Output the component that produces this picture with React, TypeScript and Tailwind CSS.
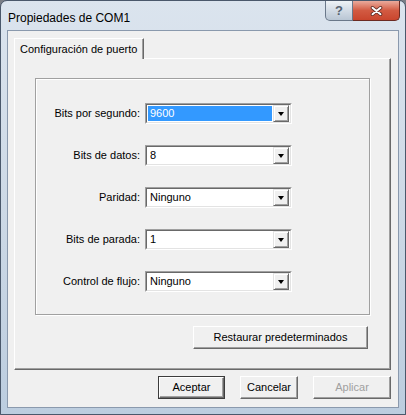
const font = { fontFamily: '"Liberation Sans", Arial, sans-serif' };

const rows = [
  { label: "Bits por segundo:", value: "9600", selected: true },
  { label: "Bits de datos:", value: "8" },
  { label: "Paridad:", value: "Ninguno" },
  { label: "Bits de parada:", value: "1" },
  { label: "Control de flujo:", value: "Ninguno" },
];

function Combo({ value, selected }: { value: string; selected?: boolean }) {
  return (
    <div className="flex h-[21px] w-[147px] border border-t-[#a0a0a0] border-l-[#a0a0a0] border-r-white border-b-white">
      <div className="flex flex-1 items-center border border-t-[#696969] border-l-[#696969] border-r-[#e3e3e3] border-b-[#e3e3e3] bg-white pl-px pr-px">
        <div
          className={`flex h-[15px] flex-1 items-center pl-[2px] ${
            selected ? "bg-[#3399ff] text-white" : "text-black"
          }`}
        >
          {value}
        </div>
        <div className="ml-px flex h-[17px] w-[16px] items-center justify-center border border-t-[#e3e3e3] border-l-[#e3e3e3] border-r-[#696969] border-b-[#696969] bg-[#f0f0f0] shadow-[inset_1px_1px_0_white,inset_-1px_-1px_0_#a0a0a0]">
          <div className="h-0 w-0 border-x-[3.5px] border-t-[4px] border-x-transparent border-t-black" />
        </div>
      </div>
    </div>
  );
}

function Button({
  children,
  width,
  isDefault,
  disabled,
}: {
  children: string;
  width: string;
  isDefault?: boolean;
  disabled?: boolean;
}) {
  return (
    <div
      className={`flex h-[23px] ${width} ${
        isDefault ? "border border-[#3c3c3c]" : ""
      }`}
    >
      <div className="flex flex-1 items-center justify-center border border-t-white border-l-white border-r-[#696969] border-b-[#696969] bg-[#f0f0f0] shadow-[inset_-1px_-1px_0_#a0a0a0]">
        <span className={disabled ? "text-[#a0a0a0]" : "text-black"}>{children}</span>
      </div>
    </div>
  );
}

export default function App() {
  return (
    <div className="h-[415px] w-[406px] bg-[#7a7e86]" style={font}>
      <div className="flex h-[415px] w-[406px] flex-col rounded-t-[7px] border border-[#4a586b] bg-gradient-to-b from-[#dbe4ee] via-[#cdd9e6] to-[#bccddf] px-[6px] pb-[6px]">
        {/* Title bar */}
        <div className="flex h-[29px] items-start justify-between">
          <span className="pl-px pt-[8px] text-[12px] text-black">Propiedades de COM1</span>
          <div className="-mr-px flex">
            <div className="flex h-[20px] w-[28px] items-center justify-center rounded-bl-[5px] border border-t-0 border-[#6a788a] bg-gradient-to-b from-[#eef2f6] via-[#d2dbe5] to-[#b9c6d4] text-[13px] font-bold text-[#56626f]">
              ?
            </div>
            <div className="flex h-[20px] w-[47px] items-center justify-center rounded-br-[5px] border border-l-0 border-t-0 border-[#6b2a22] bg-gradient-to-b from-[#e9aa9c] via-[#d25a42] to-[#c9452d]">
              <svg width="13" height="10" viewBox="0 0 13 10">
                <path
                  d="M2.5 1.8 L10.5 8.2 M10.5 1.8 L2.5 8.2"
                  stroke="#5a2a24"
                  strokeWidth="3.6"
                  strokeLinecap="round"
                />
                <path
                  d="M2.5 1.8 L10.5 8.2 M10.5 1.8 L2.5 8.2"
                  stroke="white"
                  strokeWidth="2"
                  strokeLinecap="round"
                />
              </svg>
            </div>
          </div>
        </div>

        {/* Client area */}
        <div className="flex flex-1 flex-col border border-[#8a99ad] bg-[#f0f0f0] pl-[6px] pt-[7px] text-[11px]">
          {/* Tab header */}
          <div className="flex">
            <div className="relative z-10 -mb-px flex h-[21px] w-[130px] items-center border border-b-0 border-l-white border-t-white border-r-[#696969] bg-[#f0f0f0] pl-[5px] shadow-[inset_-1px_0_0_#a0a0a0]">
              Configuración de puerto
            </div>
          </div>

          {/* Tab page */}
          <div className="flex h-[312px] w-[377px] flex-col border border-t-white border-l-white border-r-[#696969] border-b-[#696969] pl-[20px] pt-[19px] shadow-[inset_-1px_-1px_0_#a0a0a0]">
            <div className="flex h-[237px] w-[335px] flex-col gap-[21px] border border-[#a0a0a0] pt-[24px] shadow-[inset_1px_1px_0_white,1px_1px_0_white]">
              {rows.map((r) => (
                <div key={r.label} className="flex items-center">
                  <span className="w-[109px] pr-[5px] text-right text-black">{r.label}</span>
                  <Combo value={r.value} selected={r.selected} />
                </div>
              ))}
            </div>
            <div className="mt-[11px] flex w-[335px] justify-end pr-[2px]">
              <Button width="w-[175px]">Restaurar predeterminados</Button>
            </div>
          </div>

          {/* Bottom buttons */}
          <div className="mt-[6px] flex w-[377px] justify-end gap-[15px]">
            <Button width="w-[67px]" isDefault>
              Aceptar
            </Button>
            <Button width="w-[58px]">Cancelar</Button>
            <Button width="w-[78px]" disabled>
              Aplicar
            </Button>
          </div>
        </div>
      </div>
    </div>
  );
}
